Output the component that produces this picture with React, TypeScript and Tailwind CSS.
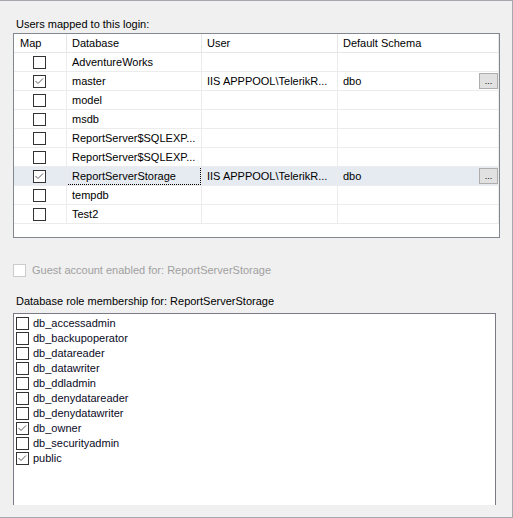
import React from 'react';

type Mapping = {
    db: string;
    mapped: boolean;
    user?: string;
    schema?: string;
    selected?: boolean;
};

const mappings: Mapping[] = [
    { db: 'AdventureWorks', mapped: false },
    { db: 'master', mapped: true, user: 'IIS APPPOOL\\TelerikR...', schema: 'dbo' },
    { db: 'model', mapped: false },
    { db: 'msdb', mapped: false },
    { db: 'ReportServer$SQLEXP...', mapped: false },
    { db: 'ReportServer$SQLEXP...', mapped: false },
    { db: 'ReportServerStorage', mapped: true, user: 'IIS APPPOOL\\TelerikR...', schema: 'dbo', selected: true },
    { db: 'tempdb', mapped: false },
    { db: 'Test2', mapped: false },
];

const roles: { name: string; on: boolean }[] = [
    { name: 'db_accessadmin', on: false },
    { name: 'db_backupoperator', on: false },
    { name: 'db_datareader', on: false },
    { name: 'db_datawriter', on: false },
    { name: 'db_ddladmin', on: false },
    { name: 'db_denydatareader', on: false },
    { name: 'db_denydatawriter', on: false },
    { name: 'db_owner', on: true },
    { name: 'db_securityadmin', on: false },
    { name: 'public', on: true },
];

// classic win32 checkbox, 13x13
const Check: React.FC<{ checked?: boolean; disabled?: boolean }> = ({ checked, disabled }) => (
    <div
        className={
            disabled
                ? 'w-[13px] h-[13px] shrink-0 border border-[#cccccc] bg-white'
                : 'w-[13px] h-[13px] shrink-0 border border-[#333333] bg-white'
        }
    >
        {checked && (
            <svg width="11" height="11" viewBox="0 0 11 11" className="block">
                <polyline points="1.5,5 4,7.5 9,2.5" fill="none" stroke="#5a5a5a" strokeWidth="1" />
            </svg>
        )}
    </div>
);

const App: React.FC = () => {
    return (
        <div className="w-[513px] h-[518px] overflow-hidden bg-[#f0f0f0] border-t border-r border-b border-[#a7a7ad] pl-[13px] pt-[15px] font-['Liberation_Sans',Arial,sans-serif] text-[11px] text-black">
            <div className="h-[16px] leading-[16px] pl-[3px]">Users mapped to this login:</div>

            {/* users grid */}
            <div className="mt-[1px] w-[487px] h-[205px] border border-[#828790] bg-white">
                <div className="flex h-[19px] leading-[18px]">
                    <div className="w-[53px] border-r border-b border-[#e6e6e6] pl-[6px]">Map</div>
                    <div className="w-[135px] border-r border-b border-[#e6e6e6] pl-[5px]">Database</div>
                    <div className="w-[136px] border-r border-b border-[#e6e6e6] pl-[5px]">User</div>
                    <div className="w-[161px] border-r border-b border-[#e6e6e6] pl-[5px]">Default Schema</div>
                </div>
                {mappings.map((m, i) => (
                    <div key={i} className={m.selected ? 'flex h-[19px] leading-[18px] bg-[#e6ebf1]' : 'flex h-[19px] leading-[18px]'}>
                        <div className="w-[53px] border-r border-b border-[#ececec] flex items-center justify-center pr-[1px]">
                            <Check checked={m.mapped} />
                        </div>
                        <div className="w-[135px] border-r border-b border-[#ececec] relative pl-[5px] whitespace-nowrap overflow-hidden">
                            {m.selected && (
                                <div className="absolute left-[-1px] top-[-1px] right-0 bottom-0 border border-dotted border-black" />
                            )}
                            {m.db}
                        </div>
                        <div className="w-[136px] border-r border-b border-[#ececec] pl-[5px] whitespace-nowrap overflow-hidden">{m.user}</div>
                        <div className="w-[161px] border-r border-b border-[#ececec] pl-[5px] flex items-center justify-between">
                            <span>{m.schema}</span>
                            {m.schema && (
                                <div className="w-[19px] h-[16px] mr-[0px] border border-[#adadad] bg-[#e1e1e1] flex items-end justify-center text-[9px] leading-[12px] pb-[1px]">
                                    ...
                                </div>
                            )}
                        </div>
                    </div>
                ))}
            </div>

            {/* guest */}
            <div className="mt-[24px] h-[16px] flex items-center gap-[6px] text-[#a0a0a0] leading-[16px]">
                <Check disabled />
                <span>Guest account enabled for: ReportServerStorage</span>
            </div>

            <div className="mt-[15px] h-[16px] leading-[16px] pl-[3px]">Database role membership for: ReportServerStorage</div>

            {/* role list */}
            <div className="mt-[4px] w-[483px] h-[192px] border-t border-l border-r border-[#7a7a86] bg-white pt-[2px] pl-[2px]">
                {roles.map((r) => (
                    <div key={r.name} className="h-[15px] flex items-center gap-[4px] leading-[15px] text-[#0a0a1e]">
                        <Check checked={r.on} />
                        <span>{r.name}</span>
                    </div>
                ))}
            </div>
        </div>
    );
};

export default App;
